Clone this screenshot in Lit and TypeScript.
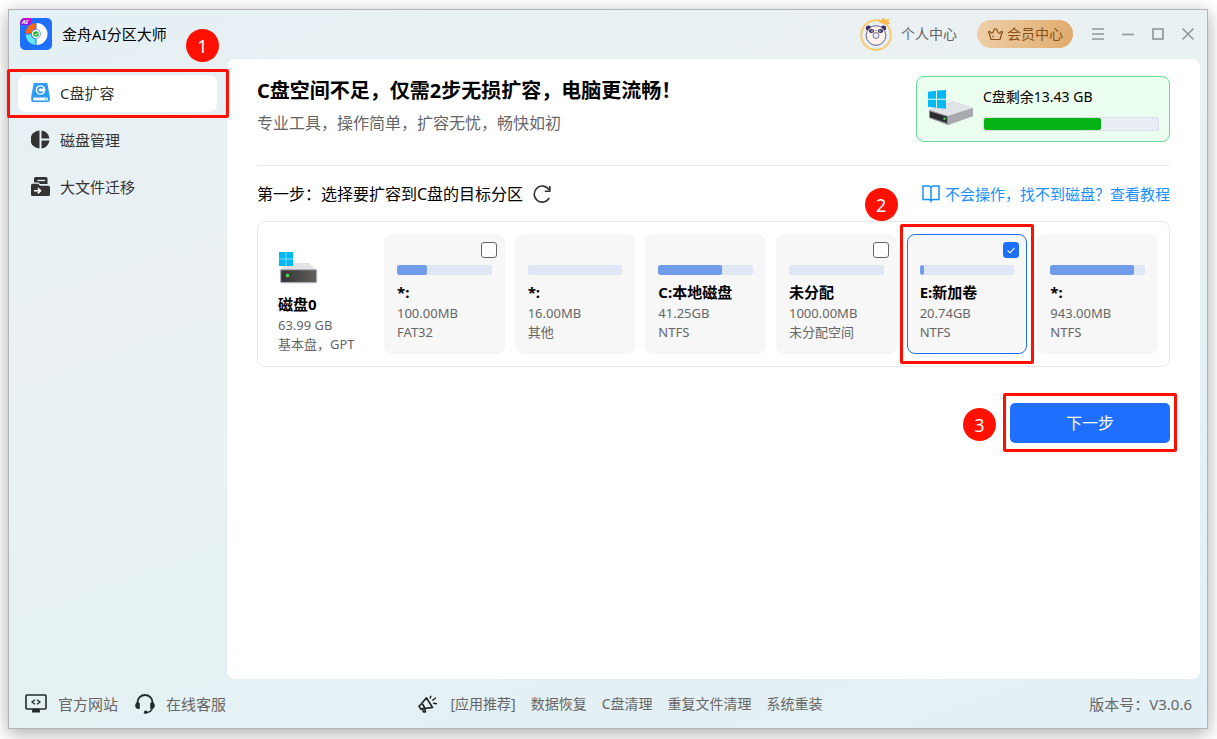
import { LitElement, html, css, svg, nothing } from "lit";
import { customElement, property, state } from "lit/decorators.js";
import { classMap } from "lit/directives/class-map.js";
import { styleMap } from "lit/directives/style-map.js";

interface Partition {
  id: string;
  name: string;
  size: string;
  format: string;
  used: number;
  selectable: boolean;
}

const partitions: Partition[] = [
  { id: "efi", name: "*:", size: "100.00MB", format: "FAT32", used: 32, selectable: true },
  { id: "msr", name: "*:", size: "16.00MB", format: "其他", used: 0, selectable: false },
  { id: "c", name: "C:本地磁盘", size: "41.25GB", format: "NTFS", used: 67, selectable: false },
  { id: "free", name: "未分配", size: "1000.00MB", format: "未分配空间", used: 0, selectable: true },
  { id: "e", name: "E:新加卷", size: "20.74GB", format: "NTFS", used: 5, selectable: true },
  { id: "re", name: "*:", size: "943.00MB", format: "NTFS", used: 88, selectable: false },
];

const logo = html`<svg width="32" height="32" viewBox="0 0 32 32" aria-hidden="true">
  <defs><linearGradient id="ai" x1="0" x2="1" y1="1" y2="0"><stop offset="0" stop-color="#7a1cf0" /><stop offset="1" stop-color="#e600b4" /></linearGradient></defs>
  <rect width="32" height="32" rx="5" fill="#1f6fff" />
  <path d="M16.500 5a11 11 0 0 1 0 22z" fill="#fff" />
  <path d="M15.500 5v6.500a5 5 0 0 0-4.500 4H5.500A11 11 0 0 1 15.500 5z" fill="#ff6610" />
  <path d="M5.500 16.500H11a5 5 0 0 0 4.500 4.500v6A11 11 0 0 1 5.500 16.500z" fill="#5fe8ff" />
  <circle cx="16" cy="16" r="4.800" fill="#4a8cff" />
  <circle cx="16" cy="16" r="4.200" fill="#fff" />
  <circle cx="16" cy="16" r="2.800" fill="#17b22e" />
  <path d="M14.500 16l1.200 1.200 2-2.300" fill="none" stroke="#fff" stroke-width="1" />
  <path d="M5 0h6v4a3 3 0 0 1-3 3H0V5a5 5 0 0 1 5-5z" fill="url(#ai)" />
  <text class="logo-ai" x="2" y="6">AI</text>
</svg>`;

const diskC = html`<svg width="19" height="19" viewBox="0 0 19 19" aria-hidden="true">
  <path d="M3.500 0h12a1 1 0 0 1 1 .8l2.300 13v3.400A1.800 1.800 0 0 1 17 19H2a1.800 1.800 0 0 1-1.800-1.800v-3.400l2.300-13a1 1 0 0 1 1-.8z" fill="#2b9df8" />
  <rect x="2" y="14.600" width="15" height="2.800" rx="1.200" fill="#fff" />
  <circle cx="15" cy="16" r=".8" fill="#2b9df8" />
  <circle cx="9.500" cy="7" r="4.800" fill="#fff" />
  <path d="M11.600 5.500a2.600 2.600 0 1 0 0 3" fill="none" stroke="#2b8df8" stroke-width="1.600" />
</svg>`;

const pie = html`<svg width="19" height="19" viewBox="0 0 19 19" aria-hidden="true">
  <path d="M8.500 .5v18A9 9 0 0 1 8.500 .5z" fill="#333" />
  <path d="M10.500 .5a9 9 0 0 1 8 8h-8zM10.500 10.500h8a9 9 0 0 1-8 8z" fill="#333" />
</svg>`;

const migrate = html`<svg width="19" height="19" viewBox="0 0 19 19" aria-hidden="true">
  <path d="M4.500 0H15a1.500 1.500 0 0 1 1.500 1.500V7H9L7.500 5.500H3v-4A1.500 1.500 0 0 1 4.500 0z" fill="#333" />
  <path d="M6.500 3.500h7.500" stroke="#e8f0f3" stroke-width="1.300" />
  <path d="M1.500 6.800h5.500l2 2h8.500A1.500 1.500 0 0 1 19 10.300v7.200a1.500 1.500 0 0 1-1.500 1.500h-16A1.500 1.500 0 0 1 0 17.500V8.300a1.500 1.500 0 0 1 1.500-1.500z" fill="#333" />
  <path d="M3 13.700h6M6.800 11l2.800 2.700-2.800 2.700" fill="none" stroke="#fff" stroke-width="1.500" />
</svg>`;

const avatar = html`<svg width="34" height="36" viewBox="0 0 34 36" aria-hidden="true">
  <circle cx="17" cy="19" r="14.800" fill="#e4effb" stroke="#fbcb6c" stroke-width="2" />
  <circle cx="9.500" cy="12" r="2.600" fill="#35285e" /><circle cx="24.500" cy="12" r="2.600" fill="#35285e" />
  <circle cx="17" cy="19.500" r="9.800" fill="#fdf3ea" stroke="#4a3c6c" stroke-width=".8" />
  <ellipse cx="12.500" cy="15" rx="2.600" ry="2" fill="#35285e" /><ellipse cx="21.500" cy="15" rx="2.600" ry="2" fill="#35285e" />
  <circle cx="13" cy="15" r=".8" fill="#fff" /><circle cx="21" cy="15" r=".8" fill="#fff" />
  <circle cx="17" cy="19.500" r="3" fill="#e1edf9" stroke="#4a3c6c" stroke-width=".7" />
  <path d="M16 14.300h2l-1 1z" fill="#35285e" />
  <path d="M21 7l-2-4 3.500 1.200L24 1l2.300 3 4-1.500-.8 3.500 2 1.500-3.500 1z" fill="#fbba52" />
</svg>`;

const crown = html`<svg width="15" height="14" viewBox="0 0 15 14" fill="none" stroke="#84521a" stroke-width="1.200" stroke-linejoin="round" stroke-linecap="round" aria-hidden="true">
  <path d="M3 12.500L1.200 6.200a.9.900 0 1 1 1.200-.6c1.200 1 2.700.6 3.400-2A1.600 1.600 0 1 1 9.200 3.600c.7 2.600 2.200 3 3.400 2a.9.900 0 1 1 1.200.6L12 12.500z" />
  <path d="M5 9v1" />
</svg>`;

const windowsTiles = svg`
  <path d="M0 1.800l8-1v8H0zM9 .6L18 0v8.800H9zM0 9.800h8v8l-8-1zM9 9.800h9v8.900l-9-.8z" fill="#00b8f4" />`;

const driveLarge = html`<svg width="46" height="36" viewBox="0 0 46 36" aria-hidden="true">
  <path d="M1 20L25 11.500 45 18v8L20 35 1 27z" fill="#b3b4b8" />
  <path d="M1 20L25 11.500 45 18 20 26z" fill="#e2e3e6" />
  <path d="M20 26l25-8v8L20 35z" fill="#a9aaad" />
  <path d="M1 20l19 6v9L1 28z" fill="#8e9093" />
  <path d="M2 21.500l17 5.200v6.200L2 27.200z" fill="#2b2c2d" />
  <circle cx="16.500" cy="28.700" r="1.200" fill="#3ee05a" />
  ${windowsTiles}
</svg>`;

const driveSmall = html`<svg width="40" height="32" viewBox="0 0 40 32" aria-hidden="true">
  <defs><linearGradient id="front" x1="0" x2="1"><stop offset="0" stop-color="#343434" /><stop offset="1" stop-color="#62605c" /></linearGradient></defs>
  <path d="M9 11h22l8 7H2z" fill="#e3e3e6" />
  <rect x="2.600" y="17.600" width="36" height="13" rx="1" fill="url(#front)" stroke="#b0adbd" stroke-width="1.200" />
  <circle cx="9.500" cy="23.500" r="1.700" fill="#4ade62" />
  <path d="M1 0h14v14H1z" fill="#00b8f4" />
  <path d="M8 0v14M1 7h14" stroke="#7fdcfa" stroke-width="1" />
</svg>`;

const refresh = html`<svg width="18" height="18" viewBox="0 0 18 18" fill="none" stroke="#333" stroke-width="1.600" aria-hidden="true">
  <path d="M16 4.800A8 8 0 1 0 16.200 13" /><path d="M16.800 1v5.200h-5" />
</svg>`;

const book = html`<svg width="18" height="18" viewBox="0 0 18 18" fill="none" stroke="#1890ff" stroke-width="1.500" aria-hidden="true">
  <path d="M9 2.500H9L7.500 1H1v13.500h6.500L9 16l1.500-1.500H17V1h-6.500L9 2.500V17.500" />
</svg>`;

const monitor = html`<svg width="22" height="19" viewBox="0 0 22 19" fill="none" stroke="#222b2d" stroke-width="1.600" aria-hidden="true">
  <rect x="1" y="1" width="20" height="14" rx="1" />
  <path d="M10 5.800L7 8l3 2.200M12 5.800L15 8l-3 2.200" stroke-width="1.300" />
  <path d="M8 15.500h6v1.500H8zM7 17.700h8" />
</svg>`;

const headset = html`<svg width="20" height="20" viewBox="0 0 20 20" fill="none" stroke="#222b2d" stroke-width="1.900" aria-hidden="true">
  <path d="M2.500 11V8.500a7.500 7.500 0 0 1 15 0V11" />
  <path d="M17.500 14a6.500 6.500 0 0 1-6 4.500" stroke-width="1.400" />
  <path d="M2 8.500h1.800a1 1 0 0 1 1 1v5.300C2 15.500.2 14 .2 11.800.2 10 .8 9 2 8.500zM18 8.500h-1.800a1 1 0 0 0-1 1v5.300c2.800.7 4.600-.8 4.600-3 0-1.800-.6-2.800-1.800-3.300z" fill="#222b2d" stroke="none" />
  <circle cx="10.700" cy="18.200" r="1.800" fill="#222b2d" stroke="none" />
</svg>`;

const megaphone = html`<svg width="20" height="18" viewBox="0 0 20 18" fill="none" stroke="#1b2223" stroke-width="1.600" stroke-linejoin="round" aria-hidden="true">
  <path d="M8.500 2.800L14.500 12.500 5 13.600 2.800 14.200 1 11.200 2.800 9.500z" />
  <path d="M4.500 9l2.300 4.200M4.500 14.300l1 2.700h2l-.8-3" />
  <path d="M12 3.500L13 .8M14.200 5.500l3.800-2.700M15.200 8.200l3.800.5" stroke-width="1.400" />
</svg>`;

/** One volume of the disk, with its usage bar and an optional tick box. */
@customElement("partition-card")
class PartitionCard extends LitElement {
  @property({ attribute: false }) data!: Partition;
  @property({ type: Boolean }) selected = false;

  static styles = css`
    :host { display: block; min-width: 0; }
    .card {
      position: relative; box-sizing: border-box; height: 120px; padding: 30px 12px 0;
      border: 1px solid #f7f7f7; border-radius: 8px; background: #f7f7f7;
      color: #666; font-size: 13px; line-height: 19px;
    }
    .card.on { border-color: #1f6fff; }
    .track { height: 10px; border-radius: 2px; background: #e0e7f4; overflow: hidden; }
    .fill { height: 100%; border-radius: 2px; background: #719ceb; }
    .name { display: block; margin-top: 6px; color: #000; font-size: 15px; font-weight: 700; line-height: 23px; white-space: nowrap; }
    .line { white-space: nowrap; }
    .tick {
      appearance: none; position: absolute; top: 7px; right: 7px; display: grid; place-items: center;
      box-sizing: border-box; width: 16px; height: 16px; margin: 0;
      border: 1px solid #666; border-radius: 3px; background: #fff;
    }
    .tick:checked { border-color: #1f6fff; background: #1f6fff; }
    .tick:checked::after {
      content: ""; width: 3px; height: 6px; margin-bottom: 2px;
      border: solid #fff; border-width: 0 1px 1px 0; transform: rotate(42deg);
    }
  `;

  private toggle() {
    this.dispatchEvent(new CustomEvent("pick", { detail: this.data.id }));
  }

  render() {
    const p = this.data;
    return html`<div class=${classMap({ card: true, on: this.selected })}>
      ${p.selectable
        ? html`<input class="tick" id="tick" type="checkbox" .checked=${this.selected} @change=${this.toggle} />`
        : nothing}
      <div class="track"><div class="fill" style=${styleMap({ width: `${p.used}%` })}></div></div>
      ${p.selectable
        ? html`<label class="name" for="tick">${p.name}</label>`
        : html`<span class="name">${p.name}</span>`}
      <div class="line">${p.size}</div>
      <div class="line">${p.format}</div>
    </div>`;
  }
}

@customElement("app-root")
class AppRoot extends LitElement {
  @state() private picked = "e";

  static styles = css`
    :host {
      display: flex; box-sizing: border-box; min-height: 100vh; padding: 9px 9px 10px 8px;
      overflow: hidden; background: #fff; color: #333;
      font-family: "Noto Sans", "Noto Sans CJK SC", sans-serif; font-size: 15px; line-height: 22px;
    }
    button { font: inherit; cursor: pointer; }
    a { color: inherit; text-decoration: none; }
    svg { display: block; flex: none; }
    h1, p { margin: 0; }

    .window {
      flex: 1; min-width: 0; display: flex; flex-direction: column;
      border: 1px solid #b1b5b7; box-shadow: 0 4px 16px rgba(0, 0, 0, 0.34);
      background: linear-gradient(160deg, #e4f0f4 0%, #ebf1f3 30%, #e5f1f3 60%, #e3f0f5 100%);
    }
    .titlebar { display: flex; align-items: center; box-sizing: border-box; height: 49px; padding: 0 11px 2px; }
    .logo-ai { fill: #fff; font-size: 6px; font-weight: 700; font-style: italic; }
    .brand { margin-left: 10px; color: #000; }
    .account { display: flex; align-items: center; gap: 8px; margin-left: auto; font-size: 14px; color: #666; }
    .vip {
      display: flex; align-items: center; gap: 4px; height: 28px; margin-left: 20px; padding: 0 10px 0 11px;
      border: 0; border-radius: 14px; background: linear-gradient(100deg, #efcfa9, #e0ab6c);
      color: #84521a; font-size: 14px;
    }
    .controls { display: flex; gap: 14px; margin-left: 17px; }
    .control { display: grid; place-items: center; width: 16px; height: 16px; padding: 0; border: 0; background: none; color: #8f9799; }

    .body { flex: 1; display: flex; padding-right: 7px; }
    .sidebar { position: relative; flex: none; box-sizing: border-box; width: 218px; padding: 16px 10px 0 9px; }
    .nav { display: flex; flex-direction: column; gap: 10px; }
    .nav-item { position: relative; display: flex; align-items: center; gap: 10px; box-sizing: border-box; height: 37px; padding: 0 0 2px 13px; border-radius: 8px; }
    .nav-item.current { background: #fff; }

    .main { flex: 1; min-width: 0; padding: 17px 30px; border-radius: 8px; background: #fff; }
    .intro { display: flex; justify-content: space-between; padding-bottom: 23px; border-bottom: 1px solid #e8e8e8; }
    .heading { color: #000; font-size: 20px; line-height: 30px; }
    .tagline { margin-top: 5px; color: #666; font-size: 16px; line-height: 24px; }
    .space {
      display: flex; align-items: center; gap: 9px; box-sizing: border-box; width: 254px; height: 66px; padding: 0 10px 2px 11px;
      border: 1px solid #66dd95; border-radius: 8px; background: #ebfeef; color: #000; font-size: 14px;
    }
    .space-info { flex: 1; }
    .space-bar { box-sizing: border-box; height: 14px; margin-top: 9px; border: 1px solid #dcdfea; border-radius: 2px; background: #e9edf6; }
    .space-fill { height: 100%; border-radius: 2px; background: #06b314; }

    .step { display: flex; align-items: center; justify-content: space-between; height: 55px; color: #000; font-size: 16px; }
    .step-title { display: flex; align-items: center; gap: 10px; }
    .reload { padding: 0; border: 0; background: none; }
    .help { display: flex; align-items: center; gap: 5px; color: #1890ff; font-size: 15px; }

    .disk { display: flex; padding: 12px 11px 12px 12px; border: 1px solid #e8e8e8; border-radius: 8px; }
    .disk-info { flex: none; box-sizing: border-box; width: 114px; padding: 18px 0 0 8px; color: #666; font-size: 13px; line-height: 19px; white-space: nowrap; }
    .disk-name { margin-top: 9px; color: #000; font-size: 15px; font-weight: 700; line-height: 23px; }
    .cards { flex: 1; display: grid; grid-template-columns: repeat(6, minmax(0, 1fr)); gap: 10px; }
    .cell { position: relative; min-width: 0; }

    .actions { display: flex; justify-content: flex-end; margin-top: 36px; }
    .next-wrap { position: relative; }
    .next { display: block; width: 160px; height: 40px; border: 0; border-radius: 5px; background: #1f6fff; color: #fff; font-size: 16px; }

    .footer { display: flex; align-items: center; height: 49px; padding: 0 15px 0 16px; color: #666; }
    .contacts { flex: 1; display: flex; gap: 17px; }
    .contact { display: flex; align-items: center; gap: 11px; }
    .picks { display: flex; align-items: center; gap: 15px; margin-left: 24px; font-size: 14px; }
    .picks-label { display: flex; align-items: center; gap: 12px; }
    .version { flex: 1; text-align: right; }

    /* Tutorial call-outs lie over the controls they point at. */
    .frame { position: absolute; z-index: 2; border: 3px solid #ff1000; border-radius: 2px; pointer-events: none; }
    .frame-nav { inset: -6px -12px -6px -11px; }
    .frame-card { inset: -10px -7px; }
    .frame-next { inset: -10px -7px -9px; }
    .badge {
      position: absolute; z-index: 3; display: grid; place-items: center; width: 33px; height: 33px;
      border-radius: 50%; background: #ff1000; color: #fff; font-size: 18px;
    }
    .badge-nav { top: -46px; right: -2px; }
    .badge-card { top: -46px; left: -42px; }
    .badge-next { top: 5px; left: -47px; }
  `;

  private onPick(e: CustomEvent<string>) {
    this.picked = this.picked === e.detail ? "" : e.detail;
  }

  render() {
    return html`<div class="window">
      <header class="titlebar">
        ${logo}<span class="brand">金舟AI分区大师</span>
        <a class="account" href="#account">${avatar}个人中心</a>
        <button class="vip" type="button">${crown}会员中心</button>
        <div class="controls">
          <button class="control" type="button" aria-label="菜单"><svg width="14" height="14" viewBox="0 0 14 14" stroke="currentColor" stroke-width="1.400"><path d="M1 2h12M1 7h12M1 12h12" /></svg></button>
          <button class="control" type="button" aria-label="最小化"><svg width="14" height="14" viewBox="0 0 14 14" stroke="currentColor" stroke-width="1.600"><path d="M1 7.500h12" /></svg></button>
          <button class="control" type="button" aria-label="最大化"><svg width="14" height="14" viewBox="0 0 14 14" fill="none" stroke="currentColor" stroke-width="1.600"><rect x="2" y="2" width="10" height="10" /></svg></button>
          <button class="control" type="button" aria-label="关闭"><svg width="14" height="14" viewBox="0 0 14 14" stroke="currentColor" stroke-width="1.600"><path d="M1.500 1.500l11 11M12.500 1.500l-11 11" /></svg></button>
        </div>
      </header>
      <div class="body">
        <aside class="sidebar">
          <nav class="nav">
            <a class="nav-item current" href="#expand">${diskC}C盘扩容<span class="frame frame-nav"></span><span class="badge badge-nav">1</span></a>
            <a class="nav-item" href="#manage">${pie}磁盘管理</a>
            <a class="nav-item" href="#migrate">${migrate}大文件迁移</a>
          </nav>
        </aside>
        <main class="main">
          <section class="intro">
            <div>
              <h1 class="heading">C盘空间不足，仅需2步无损扩容，电脑更流畅！</h1>
              <p class="tagline">专业工具，操作简单，扩容无忧，畅快如初</p>
            </div>
            <div class="space">
              ${driveLarge}
              <div class="space-info">
                <div>C盘剩余13.43 GB</div>
                <div class="space-bar"><div class="space-fill" style=${styleMap({ width: "67%" })}></div></div>
              </div>
            </div>
          </section>
          <div class="step">
            <div class="step-title">第一步：选择要扩容到C盘的目标分区<button class="reload" type="button" aria-label="刷新">${refresh}</button></div>
            <a class="help" href="#help">${book}不会操作，找不到磁盘？查看教程</a>
          </div>
          <section class="disk">
            <div class="disk-info">
              ${driveSmall}
              <div class="disk-name">磁盘0</div>
              <div>63.99 GB</div>
              <div>基本盘，GPT</div>
            </div>
            <div class="cards">
              ${partitions.map(
                (p) => html`<div class="cell">
                  <partition-card .data=${p} .selected=${this.picked === p.id} @pick=${this.onPick}></partition-card>
                  ${p.id === "e" ? html`<span class="frame frame-card"></span><span class="badge badge-card">2</span>` : nothing}
                </div>`
              )}
            </div>
          </section>
          <div class="actions">
            <div class="next-wrap">
              <button class="next" type="button">下一步</button>
              <span class="frame frame-next"></span><span class="badge badge-next">3</span>
            </div>
          </div>
        </main>
      </div>
      <footer class="footer">
        <div class="contacts">
          <a class="contact" href="#site">${monitor}官方网站</a>
          <a class="contact" href="#service">${headset}在线客服</a>
        </div>
        <div class="picks">
          <span class="picks-label">${megaphone}[应用推荐]</span>
          <a href="#recover">数据恢复</a>
          <a href="#clean">C盘清理</a>
          <a href="#duplicates">重复文件清理</a>
          <a href="#reinstall">系统重装</a>
        </div>
        <div class="version">版本号：V3.0.6</div>
      </footer>
    </div>`;
  }
}
